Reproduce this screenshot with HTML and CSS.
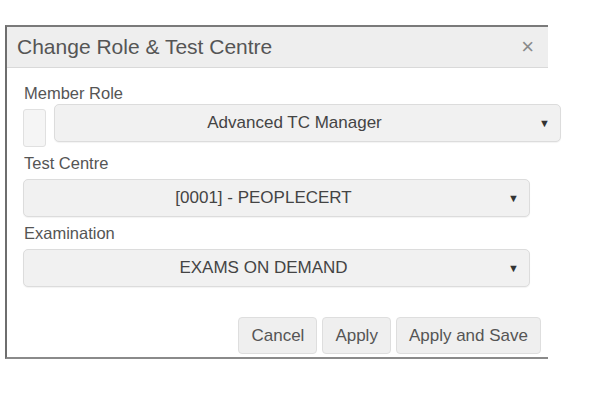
FILE: index.html
```html
<!DOCTYPE html>
<html lang="en">
<head>
<meta charset="UTF-8" />
<meta name="viewport" content="width=device-width, initial-scale=1" />
<title>Change Role &amp; Test Centre</title>
<link rel="stylesheet" href="styles.css">
</head>
<body>

<div class="dialog">
  <div class="dialog-header">
    <h1>Change Role &amp; Test Centre</h1>
    <span class="close">&times;</span>
  </div>

  <div class="dialog-body">
    <div class="field">
      <label>Member Role</label>
      <div class="role-row">
        <span class="addon"></span>
        <div class="select shifted">
          <span class="value">Advanced TC Manager</span>
          <span class="arrow">&#9660;</span>
        </div>
      </div>
    </div>

    <div class="field">
      <label>Test Centre</label>
      <div class="select">
        <span class="value">[0001] - PEOPLECERT</span>
        <span class="arrow">&#9660;</span>
      </div>
    </div>

    <div class="field">
      <label>Examination</label>
      <div class="select">
        <span class="value">EXAMS ON DEMAND</span>
        <span class="arrow">&#9660;</span>
      </div>
    </div>
  </div>

  <div class="dialog-footer">
    <button>Cancel</button>
    <button>Apply</button>
    <button>Apply and Save</button>
  </div>
</div>

</body>
</html>
```

FILE: styles.css
```css
body { margin: 0; padding: 25px 0 0 5px; background: #fff; font-family: "Liberation Sans", Arial, sans-serif; color: #555; }

.dialog {
  width: 541px;
  border-top: 2px solid #7a7a7a;
  border-left: 2px solid #6e6e6e;
  border-bottom: 2px solid #8a8a8a;
  background: #fff;
}

.dialog-header {
  display: flex;
  align-items: center;
  justify-content: space-between;
  height: 40px;
  padding: 0 14px 0 10px;
  background: #eeeeee;
  border-bottom: 1px solid #d9d9d9;
}
.dialog-header h1 { margin: 0; font-size: 21px; font-weight: normal; color: #555; }
.close { font-size: 22px; color: #8a8a8a; line-height: 1; }

.dialog-body { padding: 15px 0 0 16px; }
.field { display: flex; flex-direction: column; gap: 6px; margin-bottom: 6px; }
.field label { font-size: 16.5px; line-height: 20px; color: #555; padding-left: 1px; }

.role-row { display: flex; gap: 8px; height: 38px; }
.addon {
  flex-shrink: 0;
  width: 21px;
  height: 36px;
  background: #f5f5f5;
  border: 1px solid #e0e0e0;
  border-radius: 3px;
}

.select {
  position: relative;
  flex-shrink: 0;
  box-sizing: border-box;
  width: 507px;
  height: 38px;
  padding-right: 26px;
  display: flex;
  align-items: center;
  justify-content: center;
  background: #f1f1f1;
  border: 1px solid #dcdcdc;
  border-radius: 5px;
  box-shadow: 0 1px 1px rgba(0, 0, 0, 0.05);
  font-size: 17px;
  color: #444;
}
.select.shifted { margin-top: -5px; }
.select .arrow { position: absolute; right: 10px; top: 12px; font-size: 11px; color: #333; }

.dialog-footer {
  display: flex;
  justify-content: flex-end;
  gap: 5px;
  padding: 24px 7px 3px 0;
}
.dialog-footer button {
  height: 37px;
  padding: 0 12px;
  background: #efefef;
  border: 1px solid #dedede;
  border-radius: 4px;
  font-family: "Liberation Sans", Arial, sans-serif;
  font-size: 17px;
  color: #555;
}
```
